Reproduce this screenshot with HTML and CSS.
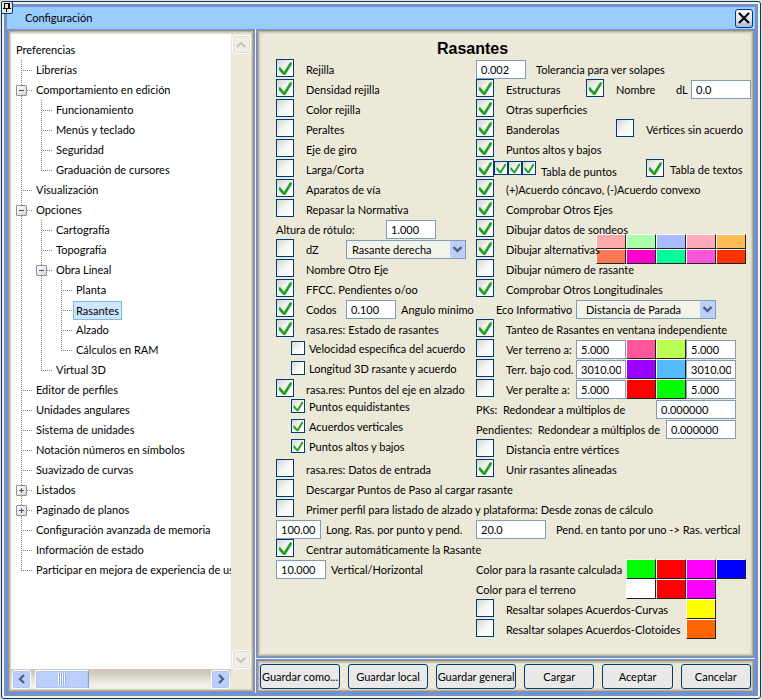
FILE: index.html
```html
<!DOCTYPE html>
<html lang="es">
<head>
<meta charset="utf-8">
<title>Configuración</title>
<link rel="stylesheet" href="styles.css">
</head>
<body>
<div class="window">
<div class="frame">
  <header class="titlebar">
    <button class="pin" aria-label="Fijar"><svg width="10" height="11" viewBox="0 0 10 11" shape-rendering="crispEdges"><path d="M2 1h6v1H2zM2 2h1v4H2zM6 2h2v4H6zM1 6h8v1H1zM4 7h1v3H4z"/></svg></button>
    <span class="caption">Configuración</span>
    <button class="close" aria-label="Cerrar"><svg width="12" height="12" viewBox="0 0 12 12"><path d="M1 1l10 10M11 1L1 11" stroke="#000" stroke-width="2.2"/></svg></button>
  </header>
  <div class="panels">
    <nav class="panel side">
      <div class="tree">
        <div class="root">Preferencias</div>
        <ul>
          <li><div class="node"><span>Librerías</span></div></li>
          <li><div class="node"><button class="toggle" aria-label="Contraer"></button><span>Comportamiento en edición</span></div>
            <ul>
              <li><div class="node"><span>Funcionamiento</span></div></li>
              <li><div class="node"><span>Menús y teclado</span></div></li>
              <li><div class="node"><span>Seguridad</span></div></li>
              <li><div class="node"><span>Graduación de cursores</span></div></li>
            </ul>
          </li>
          <li><div class="node"><span>Visualización</span></div></li>
          <li><div class="node"><button class="toggle" aria-label="Contraer"></button><span>Opciones</span></div>
            <ul>
              <li><div class="node"><span>Cartografía</span></div></li>
              <li><div class="node"><span>Topografía</span></div></li>
              <li><div class="node"><button class="toggle" aria-label="Contraer"></button><span>Obra Lineal</span></div>
                <ul>
                  <li><div class="node"><span>Planta</span></div></li>
                  <li><div class="node"><span class="selected">Rasantes</span></div></li>
                  <li><div class="node"><span>Alzado</span></div></li>
                  <li><div class="node"><span>Cálculos en RAM</span></div></li>
                </ul>
              </li>
              <li><div class="node"><span>Virtual 3D</span></div></li>
            </ul>
          </li>
          <li><div class="node"><span>Editor de perfiles</span></div></li>
          <li><div class="node"><span>Unidades angulares</span></div></li>
          <li><div class="node"><span>Sistema de unidades</span></div></li>
          <li><div class="node"><span>Notación números en símbolos</span></div></li>
          <li><div class="node"><span>Suavizado de curvas</span></div></li>
          <li><div class="node"><button class="toggle plus" aria-label="Expandir"></button><span>Listados</span></div></li>
          <li><div class="node"><button class="toggle plus" aria-label="Expandir"></button><span>Paginado de planos</span></div></li>
          <li><div class="node"><span>Configuración avanzada de memoria</span></div></li>
          <li><div class="node"><span>Información de estado</span></div></li>
          <li><div class="node"><span>Participar en mejora de experiencia de usuario</span></div></li>
        </ul>
      </div>
      <div class="hscroll">
        <button class="sb" aria-label="Izquierda"><svg width="8" height="10" viewBox="0 0 8 10"><path d="M6 1L2 5l4 4" fill="none" stroke="#4d6185" stroke-width="2.4"/></svg></button>
        <div class="thumb"><i></i></div>
        <button class="sb end" aria-label="Derecha"><svg width="8" height="10" viewBox="0 0 8 10"><path d="M2 1l4 4-4 4" fill="none" stroke="#4d6185" stroke-width="2.4"/></svg></button>
      </div>
      <div class="vscroll">
        <button class="sb off" aria-label="Arriba" disabled><svg width="10" height="8" viewBox="0 0 10 8"><path d="M1 6l4-4 4 4" fill="none" stroke="#c9c7ba" stroke-width="2.2"/></svg></button>
        <button class="sb off" aria-label="Abajo" disabled><svg width="10" height="8" viewBox="0 0 10 8"><path d="M1 2l4 4 4-4" fill="none" stroke="#c9c7ba" stroke-width="2.2"/></svg></button>
      </div>
    </nav>

    <main class="panel content">
      <h1>Rasantes</h1>
      <form class="form">
        <div class="cell"><label class="opt"><input type="checkbox" checked><span>Rejilla</span></label></div>
        <div class="cell"><input class="w50" id="tol" value="0.002"><label class="gap10" for="tol">Tolerancia para ver solapes</label></div>

        <div class="cell"><label class="opt"><input type="checkbox" checked><span>Densidad rejilla</span></label></div>
        <div class="cell"><label class="opt w110"><input type="checkbox" checked><span>Estructuras</span></label><label class="opt w90"><input type="checkbox" checked><span>Nombre</span></label><label class="w15" for="dl">dL</label><input class="w60" id="dl" value="0.0"></div>

        <div class="cell"><label class="opt"><input type="checkbox"><span>Color rejilla</span></label></div>
        <div class="cell"><label class="opt"><input type="checkbox" checked><span>Otras superficies</span></label></div>

        <div class="cell"><label class="opt"><input type="checkbox"><span>Peraltes</span></label></div>
        <div class="cell"><label class="opt w140"><input type="checkbox" checked><span>Banderolas</span></label><label class="opt"><input type="checkbox"><span>Vértices sin acuerdo</span></label></div>

        <div class="cell"><label class="opt"><input type="checkbox"><span>Eje de giro</span></label></div>
        <div class="cell"><label class="opt"><input type="checkbox" checked><span>Puntos altos y bajos</span></label></div>

        <div class="cell"><label class="opt"><input type="checkbox"><span>Larga/Corta</span></label></div>
        <div class="cell"><input type="checkbox" id="tabla" checked><div class="minis"><input type="checkbox" class="mini" aria-label="Columna 1" checked><input type="checkbox" class="mini" aria-label="Columna 2" checked><input type="checkbox" class="mini" aria-label="Columna 3" checked><label class="gap5 w110" for="tabla">Tabla de puntos</label></div><label class="opt tight"><input type="checkbox" checked><span>Tabla de textos</span></label></div>

        <div class="cell"><label class="opt"><input type="checkbox" checked><span>Aparatos de vía</span></label></div>
        <div class="cell"><label class="opt"><input type="checkbox" checked><span>(+)Acuerdo cóncavo, (-)Acuerdo convexo</span></label></div>

        <div class="cell"><label class="opt"><input type="checkbox"><span>Repasar la Normativa</span></label></div>
        <div class="cell"><label class="opt"><input type="checkbox" checked><span>Comprobar Otros Ejes</span></label></div>

        <div class="cell"><label class="w110" for="alt">Altura de rótulo:</label><input class="w50" id="alt" value="1.000"></div>
        <div class="cell"><label class="opt"><input type="checkbox" checked><span>Dibujar datos de sondeos</span></label></div>

        <div class="cell"><label class="opt w70"><input type="checkbox"><span>dZ</span></label><div class="combo w120"><select aria-label="Rasante"><option>Rasante derecha</option></select><svg width="15" height="17" viewBox="0 0 15 17"><rect width="15" height="17" rx="1" fill="#bccffb"/><path d="M3.500 6l4 4 4-4" fill="none" stroke="#4d6185" stroke-width="2.400"/></svg></div></div>
        <div class="cell"><label class="opt above w120"><input type="checkbox" checked><span>Dibujar alternativas</span></label>
          <div class="palette">
            <button type="button" class="sw rose" aria-label="Color 1"></button><button type="button" class="sw mint" aria-label="Color 2"></button><button type="button" class="sw sky" aria-label="Color 3"></button><button type="button" class="sw pink" aria-label="Color 4"></button><button type="button" class="sw amber" aria-label="Color 5"></button>
            <button type="button" class="sw coral" aria-label="Color 6"></button><button type="button" class="sw fuchsia" aria-label="Color 7"></button><button type="button" class="sw jade" aria-label="Color 8"></button><button type="button" class="sw orchid" aria-label="Color 9"></button><button type="button" class="sw scarlet" aria-label="Color 10"></button>
          </div>
        </div>

        <div class="cell"><label class="opt"><input type="checkbox"><span>Nombre Otro Eje</span></label></div>
        <div class="cell"><label class="opt"><input type="checkbox"><span>Dibujar número de rasante</span></label></div>

        <div class="cell"><label class="opt"><input type="checkbox" checked><span>FFCC. Pendientes o/oo</span></label></div>
        <div class="cell"><label class="opt"><input type="checkbox" checked><span>Comprobar Otros Longitudinales</span></label></div>

        <div class="cell"><label class="opt w70"><input type="checkbox" checked><span>Codos</span></label><input class="w50" id="ang" value="0.100"><label class="gap5" for="ang">Angulo mínimo</label></div>
        <div class="cell indent"><label class="w80" for="eco">Eco Informativo</label><div class="combo w140"><select id="eco" class="roomy"><option>Distancia de Parada</option></select><svg width="15" height="17" viewBox="0 0 15 17"><rect width="15" height="17" rx="1" fill="#bccffb"/><path d="M3.500 6l4 4 4-4" fill="none" stroke="#4d6185" stroke-width="2.400"/></svg></div></div>

        <div class="cell"><label class="opt"><input type="checkbox" checked><span>rasa.res: Estado de rasantes</span></label></div>
        <div class="cell"><label class="opt"><input type="checkbox" checked><span>Tanteo de Rasantes en ventana independiente</span></label></div>

        <div class="cell"><label class="sub lower"><input type="checkbox" class="mini"><span>Velocidad específica del acuerdo</span></label></div>
        <div class="cell"><label class="opt w100"><input type="checkbox"><span>Ver terreno a:</span></label><input class="w50" aria-label="Terreno 1" value="5.000"><button type="button" class="sw hotpink" aria-label="Color"></button><button type="button" class="sw lime" aria-label="Color"></button><input class="w50" aria-label="Terreno 2" value="5.000"></div>

        <div class="cell"><label class="sub lower"><input type="checkbox" class="mini"><span>Longitud 3D rasante y acuerdo</span></label></div>
        <div class="cell"><label class="opt w100"><input type="checkbox"><span>Terr. bajo cod.</span></label><input class="w50" aria-label="Código 1" value="3010.00"><button type="button" class="sw violet" aria-label="Color"></button><button type="button" class="sw azure" aria-label="Color"></button><input class="w50" aria-label="Código 2" value="3010.00"></div>

        <div class="cell"><label class="opt"><input type="checkbox" checked><span>rasa.res: Puntos del eje en alzado</span></label></div>
        <div class="cell"><label class="opt w100"><input type="checkbox"><span>Ver peralte a:</span></label><input class="w50" aria-label="Peralte 1" value="5.000"><button type="button" class="sw red" aria-label="Color"></button><button type="button" class="sw green" aria-label="Color"></button><input class="w50" aria-label="Peralte 2" value="5.000"></div>

        <div class="cell"><label class="sub"><input type="checkbox" class="mini" checked><span>Puntos equidistantes</span></label></div>
        <div class="cell"><label class="w180" for="pk">PKs:&nbsp; Redondear a múltiplos de</label><input class="w80" id="pk" value="0.000000"></div>

        <div class="cell"><label class="sub"><input type="checkbox" class="mini" checked><span>Acuerdos verticales</span></label></div>
        <div class="cell"><label class="w190" for="pend">Pendientes:&nbsp; Redondear a múltiplos de</label><input class="w70" id="pend" value="0.000000"></div>

        <div class="cell"><label class="sub"><input type="checkbox" class="mini" checked><span>Puntos altos y bajos</span></label></div>
        <div class="cell"><label class="opt"><input type="checkbox"><span>Distancia entre vértices</span></label></div>

        <div class="cell"><label class="opt"><input type="checkbox"><span>rasa.res: Datos de entrada</span></label></div>
        <div class="cell"><label class="opt"><input type="checkbox" checked><span>Unir rasantes alineadas</span></label></div>

        <div class="cell full"><label class="opt"><input type="checkbox"><span>Descargar Puntos de Paso al cargar rasante</span></label></div>
        <div class="cell full"><label class="opt"><input type="checkbox"><span>Primer perfil para listado de alzado y plataforma: Desde zonas de cálculo</span></label></div>

        <div class="cell"><input class="w45" id="lon" value="100.00"><label class="gap5" for="lon">Long. Ras. por punto y pend.</label></div>
        <div class="cell"><input class="w70" id="tan" value="20.0"><label class="gap10" for="tan">Pend. en tanto por uno -&gt; Ras. vertical</label></div>

        <div class="cell full"><label class="opt"><input type="checkbox" checked><span>Centrar automáticamente la Rasante</span></label></div>

        <div class="cell"><input class="w50" id="ver" value="10.000"><label class="gap5" for="ver">Vertical/Horizontal</label></div>
        <div class="cell"><span class="w150">Color para la rasante calculada</span><button type="button" class="sw green" aria-label="Color"></button><button type="button" class="sw red" aria-label="Color"></button><button type="button" class="sw magenta" aria-label="Color"></button><button type="button" class="sw blue" aria-label="Color"></button></div>

        <div class="cell right"><span class="w150">Color para el terreno</span><button type="button" class="sw white" aria-label="Color"></button><button type="button" class="sw red" aria-label="Color"></button><button type="button" class="sw magenta" aria-label="Color"></button></div>
        <div class="cell right"><label class="opt w210"><input type="checkbox"><span>Resaltar solapes Acuerdos-Curvas</span></label><button type="button" class="sw yellow" aria-label="Color"></button></div>
        <div class="cell right"><label class="opt w210"><input type="checkbox"><span>Resaltar solapes Acuerdos-Clotoides</span></label><button type="button" class="sw orange" aria-label="Color"></button></div>
      </form>
    </main>

    <footer class="panel actions">
      <button class="wide">Guardar como...</button>
      <button class="wide">Guardar local</button>
      <button class="wide">Guardar general</button>
      <button>Cargar</button>
      <button>Aceptar</button>
      <button>Cancelar</button>
    </footer>
  </div>
</div>
</div>
</body>
</html>
```
FILE: styles.css
```css
:root {
  --navy: #003c74;
  --blue: #6490f0;
  --taupe: #9c917e;
  --face: #ece9d8;
  --field: #7f9db9;
}

* { box-sizing: border-box; }

body {
  margin: 0;
  height: 100vh;
  padding: 1px;
  display: flex;
  background: #e4e2cc;
  color: #000;
  font-family: Lato, "Liberation Sans", sans-serif;
  font-size: 11px;
  white-space: nowrap;
}

button, input, select {
  margin: 0;
  padding: 0;
  font: inherit;
  color: inherit;
  border-radius: 0;
}

svg { display: block; }

.window {
  flex: 1;
  min-width: 0;
  display: flex;
  padding: 2px;
  border: 1px solid var(--navy);
  border-radius: 3px;
  background: #f4f3ee;
}

.frame {
  flex: 1;
  min-width: 0;
  display: flex;
  flex-direction: column;
  border: 3px double var(--blue);
  background: var(--taupe);
}

/* Title bar */
.titlebar {
  display: flex;
  justify-content: space-between;
  align-items: center;
  height: 22px;
  padding: 0 2px 0 18px;
  background: #99ccff;
}

.pin {
  position: absolute;
  left: 1px;
  top: 1px;
  width: 12px;
  height: 13px;
  border: 1px solid var(--navy);
  border-radius: 2px;
  background: #ece9d8;
  display: grid;
  place-items: center;
}

.caption { line-height: 22px; }

.close {
  width: 18px;
  height: 19px;
  display: grid;
  place-items: center;
  border: 1px solid var(--navy);
  border-radius: 3px;
  background: linear-gradient(#ffffff, #e0e2ec 60%, #a9b6d8);
}

/* Panels */
.panels {
  flex: 1;
  min-height: 0;
  display: grid;
  grid-template-columns: 248px minmax(0, 1fr);
  grid-template-rows: 1fr auto;
  gap: 1px;
  background: #f4f3ee;
}

.panel {
  border: 1px solid var(--blue);
  background: var(--face);
  box-shadow: inset 0 0 0 1px var(--taupe), inset 0 0 0 2px #b9b1a1, inset 0 0 0 3px #d3cfc3, inset 0 0 0 4px #e2dfd0;
}

.side {
  grid-row: 1 / 3;
  display: grid;
  grid-template-columns: minmax(0, 1fr) 20px;
  grid-template-rows: 1fr 20px;
  padding: 4px 3px 3px;
}

.tree {
  overflow: hidden;
  padding: 6px 0 0 5px;
  background: #fff;
  line-height: 20px;
}

.tree ul {
  list-style: none;
  margin: 0;
  padding: 0;
}

.tree li {
  padding-left: 20px;
  background:
    repeating-linear-gradient(to bottom, #808080 0 1px, transparent 1px 2px) 5px 0 / 1px 100% no-repeat,
    repeating-linear-gradient(to right, #808080 0 1px, transparent 1px 2px) 5px 10px / 11px 1px no-repeat;
}

.tree li:last-child {
  background:
    repeating-linear-gradient(to bottom, #808080 0 1px, transparent 1px 2px) 5px 0 / 1px 10px no-repeat,
    repeating-linear-gradient(to right, #808080 0 1px, transparent 1px 2px) 5px 10px / 11px 1px no-repeat;
}

.node {
  display: flex;
  align-items: center;
  height: 20px;
}

.node .selected {
  margin: 0 -3px;
  padding: 0 2px;
  border: 1px solid #77bde6;
  background: #cfe6fd;
  line-height: 17px;
}

.toggle {
  width: 11px;
  height: 11px;
  margin: 0 9px 0 -20px;
  border: 1px solid #919191;
  border-radius: 1px;
  background:
    linear-gradient(#3b4f91, #3b4f91) 50% 50% / 5px 1px no-repeat,
    linear-gradient(135deg, #fff, #d8d8d8);
}

.toggle.plus {
  background:
    linear-gradient(#3b4f91, #3b4f91) 50% 50% / 5px 1px no-repeat,
    linear-gradient(#3b4f91, #3b4f91) 50% 50% / 1px 5px no-repeat,
    linear-gradient(135deg, #fff, #d8d8d8);
}

/* Scroll bars */
.hscroll {
  grid-row: 2;
  display: flex;
  align-items: center;
  gap: 4px;
  padding: 0 1px;
  background: linear-gradient(#d0cabd 0 20%, #dedad0 40%, #f1f0ec 80%);
}

.vscroll {
  grid-row: 1 / 3;
  grid-column: 2;
  display: flex;
  flex-direction: column;
  justify-content: space-between;
  align-items: center;
  padding: 1px 0 20px;
  background: var(--face);
}

.sb {
  width: 19px;
  height: 19px;
  display: grid;
  place-items: center;
  border: 1px solid #fff;
  border-radius: 3px;
  background: #bccffb;
  box-shadow: inset 0 0 0 1px #aec4f5;
}

.sb.end { margin-left: auto; }

.sb.off {
  background: #f0eee7;
  box-shadow: inset 0 0 0 1px #e3e0d3;
}

.thumb {
  width: 54px;
  height: 19px;
  display: grid;
  place-items: center;
  border: 1px solid #fff;
  border-right-color: #7f9fd6;
  border-radius: 2px;
  background: #bccffb;
  box-shadow: inset 0 0 0 1px #aec4f5;
}

.thumb i {
  width: 8px;
  height: 12px;
  background: repeating-linear-gradient(to right, #fff 0 1px, #8fabe8 1px 2px);
}

/* Form */
.content { padding: 9px 3px 3px 19px; }

h1 {
  margin: 0;
  padding-left: 161px;
  font: bold 16px/20px "Liberation Sans", sans-serif;
}

.form {
  display: grid;
  grid-template-columns: 200px 1fr;
  grid-auto-rows: 20px;
  line-height: 22px;
}

.cell {
  display: flex;
  align-items: flex-start;
}

.cell > * { flex: none; }
.full { grid-column: 1 / 3; }
.right { grid-column: 2; }
.indent { padding-left: 20px; }

.opt {
  display: flex;
  align-items: flex-start;
  gap: 12px;
}

.opt.tight { gap: 6px; }

/* Keeps a long label readable next to the palette */
.above { z-index: 1; }

.sub {
  display: flex;
  align-items: flex-start;
  gap: 4px;
  padding-left: 15px;
  line-height: 16px;
}

.sub.lower { padding-top: 2px; }

.minis {
  display: flex;
  padding-top: 2px;
}

.gap5 { padding-left: 5px; }
.gap10 { padding-left: 10px; }

.w15 { width: 15px; }
.w45 { width: 45px; }
.w50 { width: 50px; }
.w60 { width: 60px; }
.w70 { width: 70px; }
.w80 { width: 80px; }
.w90 { width: 90px; }
.w100 { width: 100px; }
.w110 { width: 110px; }
.w120 { width: 120px; }
.w140 { width: 140px; }
.w150 { width: 150px; }
.w180 { width: 180px; }
.w190 { width: 190px; }
.w210 { width: 210px; }

input:not([type]) {
  height: 19px;
  margin-top: 1px;
  padding: 0 4px;
  border: 1px solid var(--field);
  background: #fff;
}

input[type="checkbox"] {
  appearance: none;
  flex: none;
  width: 18px;
  height: 18px;
  display: grid;
  border: 1px solid var(--navy);
  background: linear-gradient(135deg, #d6d6d0, #f6f6f4 50%, #fff);
}

input[type="checkbox"].mini {
  width: 14px;
  height: 14px;
}

input[type="checkbox"]:checked::before {
  content: "";
  background: #21a121;
  clip-path: polygon(12% 46%, 20% 46%, 44% 74%, 80% 16%, 92% 12%, 92% 28%, 52% 94%, 40% 94%, 12% 64%);
}

.combo {
  display: grid;
  grid-template: 19px / 100%;
  margin-top: 1px;
}

.combo > * { grid-area: 1 / 1; }

.combo select {
  appearance: none;
  min-width: 0;
  padding: 0 18px 0 5px;
  border: 1px solid var(--field);
  background: #f4f3ea;
  line-height: 17px;
}

.combo select.roomy { padding-left: 9px; }

.combo svg {
  justify-self: end;
  align-self: center;
  margin-right: 1px;
  pointer-events: none;
}

.palette {
  align-self: center;
  display: grid;
  grid-template-columns: repeat(5, 30px);
  grid-auto-rows: 15px;
}

.sw {
  width: 30px;
  height: 20px;
  border: 1px solid;
  border-color: #fff #222 #222 #fff;
}

.palette .sw { height: 15px; }

.rose { background: #ffaaaa; }
.mint { background: #aaffaa; }
.sky { background: #aabbff; }
.pink { background: #ffaabb; }
.amber { background: #ffbb55; }
.coral { background: #ff7755; }
.fuchsia { background: #ff00cc; }
.jade { background: #00ff99; }
.orchid { background: #ff55dd; }
.scarlet { background: #ff3300; }
.hotpink { background: #ff5599; }
.lime { background: #bbff55; }
.violet { background: #9900ff; }
.azure { background: #55bbff; }
.red { background: #ff0000; }
.green { background: #00ff00; }
.magenta { background: #ff00ff; }
.blue { background: #0000ff; }
.white { background: #ffffff; }
.yellow { background: #ffff00; }
.orange { background: #ff6600; }

/* Footer */
.actions {
  display: flex;
  gap: 8px;
  padding: 4px 3px 3px;
}

.actions button {
  flex: 7 1 0;
  min-width: 0;
  height: 25px;
  border: 1px solid var(--navy);
  border-radius: 3px;
  background: #e9e9e9;
}

.actions .wide { flex-grow: 8; }
```
